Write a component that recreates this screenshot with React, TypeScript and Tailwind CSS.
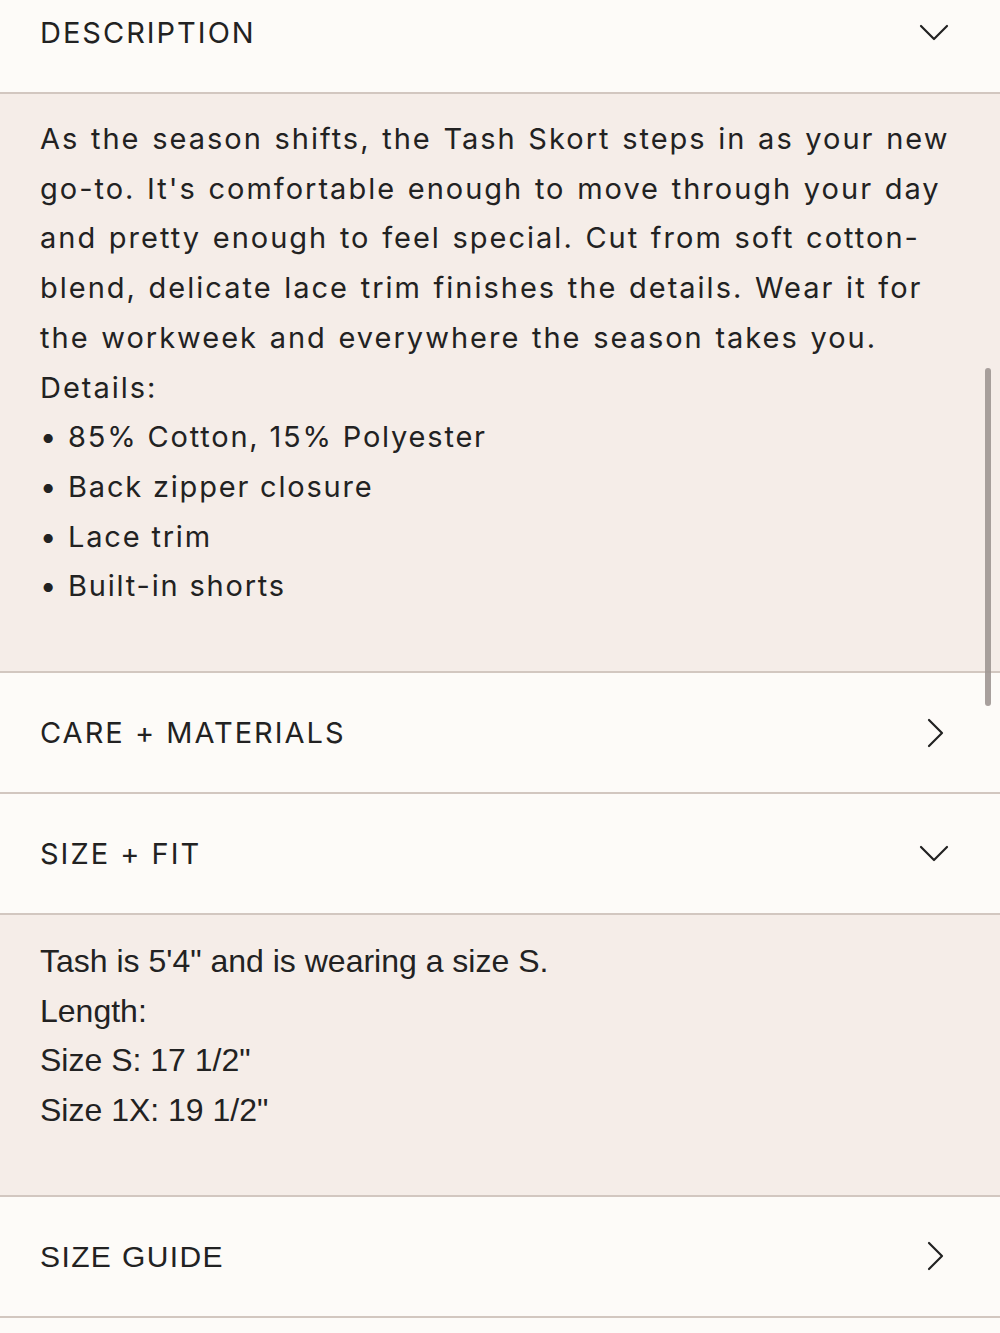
import React from "react";

const ChevronDown = () => (
  <svg width="30" height="18" viewBox="0 0 30 18" fill="none" className="block">
    <path d="M2 2 L15 15 L28 2" stroke="#222" strokeWidth="2.2" strokeLinecap="round" strokeLinejoin="round" />
  </svg>
);

const ChevronRight = () => (
  <svg width="18" height="30" viewBox="0 0 18 30" fill="none" className="block">
    <path d="M2 2 L15 15 L2 28" stroke="#222" strokeWidth="2.2" strokeLinecap="round" strokeLinejoin="round" />
  </svg>
);

const Header = ({ title, open, first, guide }: { title: string; open: boolean; first?: boolean; guide?: boolean }) => (
  <div
    className={
      "flex items-center justify-between bg-[#fdfbf8] pl-[40px] pr-[51px] h-[121px] border-b-2 border-[#d2c7c0] " +
      (first ? "-mt-[27px]" : "")
    }
  >
    <span
      className={
        guide
          ? "text-[30px] text-[#222] tracking-[1.4px] font-['Liberation_Sans',sans-serif]"
          : "text-[29px] text-[#222] tracking-[2px] font-['Inter',sans-serif]"
      }
    >
      {title}
    </span>
    <span className={open ? "" : "pr-[4px]"}>{open ? <ChevronDown /> : <ChevronRight />}</span>
  </div>
);

export default function App() {
  return (
    <div className="relative w-[1000px] h-[1333px] overflow-hidden bg-[#fdfbf8]">
      <Header title="DESCRIPTION" open first />
      <div className="bg-[#f5ede8] border-b-2 border-[#d2c7c0] pl-[40px] pr-[40px] pt-[20px] pb-[60px] text-[29px] leading-[49.7px] text-[#222] tracking-[2px] [word-spacing:1.5px] font-['Inter',sans-serif]">
        <p className="whitespace-nowrap">
          As the season shifts, the Tash Skort steps in as your new
          <br />
          go-to. It's comfortable enough to move through your day
          <br />
          and pretty enough to feel special. Cut from soft cotton-
          <br />
          blend, delicate lace trim finishes the details. Wear it for
          <br />
          the workweek and everywhere the season takes you.
        </p>
        <p>Details:</p>
        <div className="tracking-[1.8px] [word-spacing:0px]">
          <p>• 85% Cotton, 15% Polyester</p>
          <p>• Back zipper closure</p>
          <p>• Lace trim</p>
          <p>• Built-in shorts</p>
        </div>
      </div>
      <Header title="CARE + MATERIALS" open={false} />
      <Header title="SIZE + FIT" open />
      <div className="bg-[#f5ede8] border-b-2 border-[#d2c7c0] pl-[40px] pr-[40px] pt-[22px] pb-[59px] text-[32px] leading-[49.7px] text-[#222] font-['Liberation_Sans',sans-serif]">
        <p>Tash is 5'4" and is wearing a size S.</p>
        <p>Length:</p>
        <p>Size S: 17 1/2"</p>
        <p>Size 1X: 19 1/2"</p>
      </div>
      <Header title="SIZE GUIDE" open={false} guide />
      <div className="absolute left-[985px] top-[368px] w-[6px] h-[338px] rounded-full bg-[#9e9692] opacity-90" />
    </div>
  );
}
